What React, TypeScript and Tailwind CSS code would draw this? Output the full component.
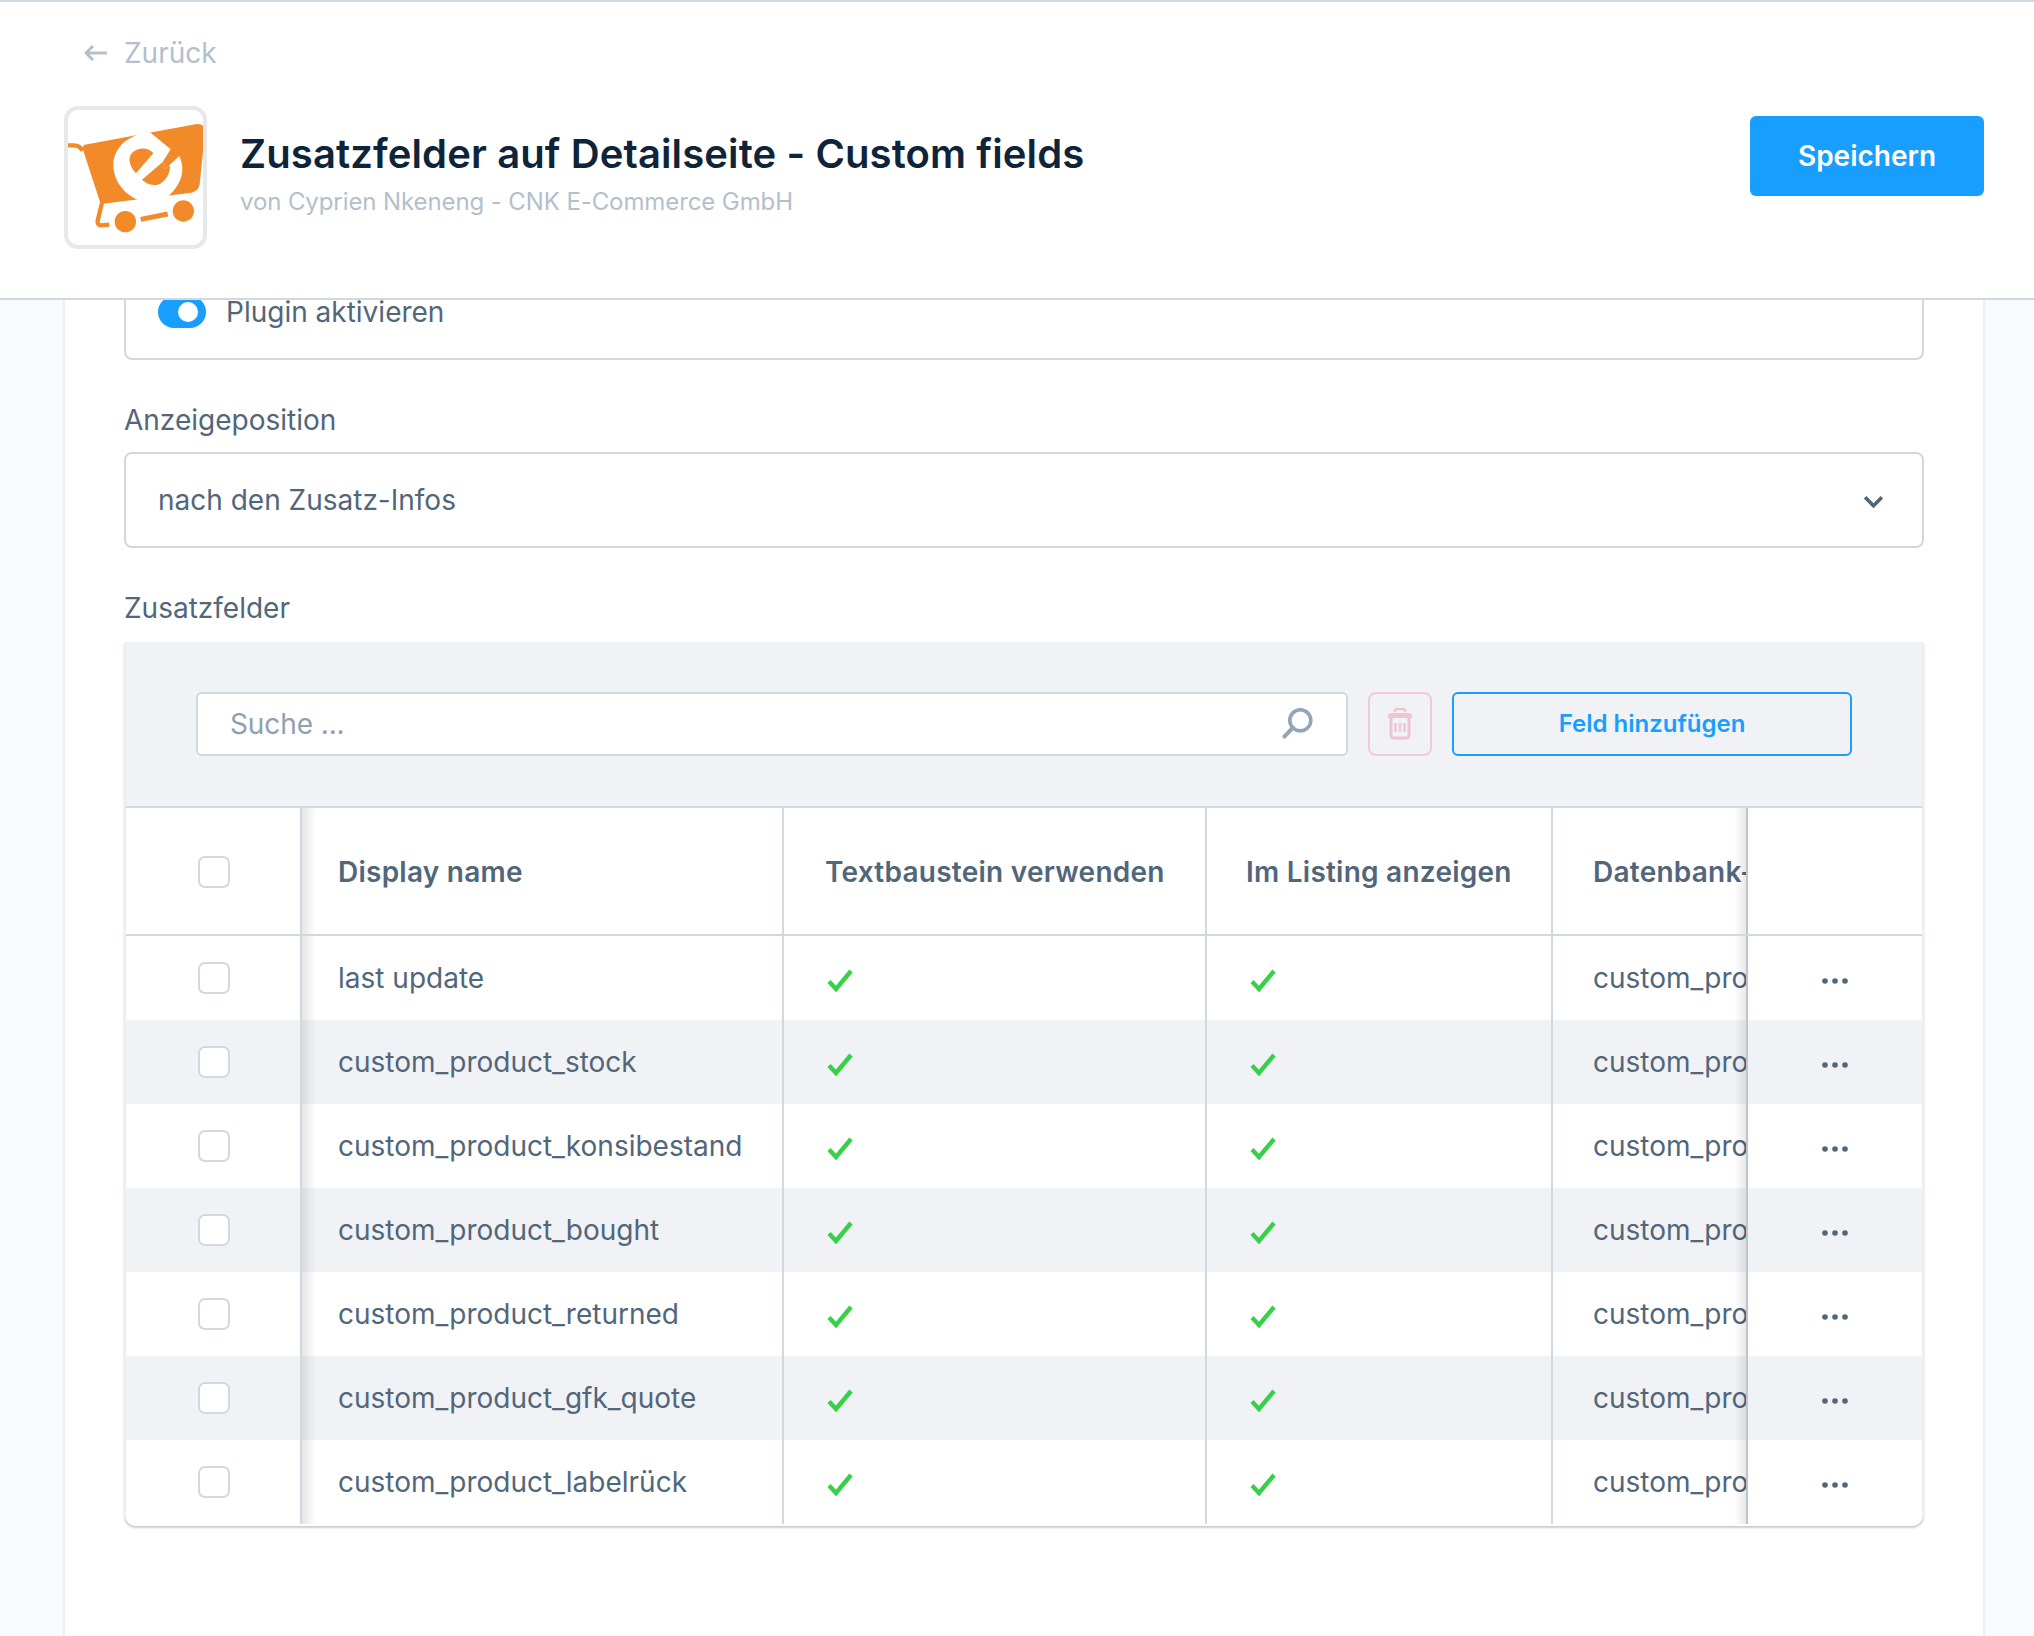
const rows = [
  "last update",
  "custom_product_stock",
  "custom_product_konsibestand",
  "custom_product_bought",
  "custom_product_returned",
  "custom_product_gfk_quote",
  "custom_product_labelrück",
];

function CartLogo() {
  return (
    <svg viewBox="54 60 405 405" className="h-full w-full">
      {/* cart */}
      <path d="M52 166h20c12 0 20 6 26 16" fill="none" stroke="#f28a2a" strokeWidth="13" />
      <path d="M104 164L436 103Q466 98 465 128L449 282Q446 304 424 308L152 342L98 176Q98 166 104 164Z" fill="#f28a2a" />
      <path d="M156 338L143 392Q141 406 154 406L178 404" fill="none" stroke="#f28a2a" strokeWidth="13" />
      <circle cx="226" cy="395" r="32" fill="#f28a2a" />
      <circle cx="400" cy="363" r="32" fill="#f28a2a" />
      <path d="M272 388L353 372" stroke="#f28a2a" strokeWidth="15" />
      {/* e */}
      <path d="M300 127C240 132 190 170 190 226C190 280 235 326 283 336L345 326C385 296 412 250 388 198L345 238L338 216L362 178Z" fill="#fff" />
      <path d="M258 250L310 190C295 170 262 172 245 190C232 206 240 232 258 250Z" fill="#f28a2a" />
      <path d="M276 269L338 216L345 238L360 226C362 250 345 280 320 285C304 287 288 280 276 269Z" fill="#f28a2a" />
    </svg>
  );
}

function Check() {
  return (
    <svg viewBox="0 0 26 24" className="mt-[4px] h-[24px] w-[26px]">
      <path d="M2 13.5L9 21L24 3" fill="none" stroke="#37d046" strokeWidth="4.4" />
    </svg>
  );
}

function Dots() {
  return (
    <svg viewBox="0 0 26 6" className="mt-[6px] h-[6px] w-[26px] fill-[#52667a]">
      <circle cx="3" cy="3" r="2.8" />
      <circle cx="13" cy="3" r="2.8" />
      <circle cx="23" cy="3" r="2.8" />
    </svg>
  );
}

function Checkbox() {
  return <div className="h-[32px] w-[32px] rounded-[7px] border-2 border-[#d1d9e0] bg-white" />;
}

function TableRow({ name, index }: { name: string; index: number }) {
  const bg = index % 2 === 1 ? "bg-[#f0f2f5]" : "bg-white";
  return (
    <div className={`flex h-[84px] items-center text-[28px] text-[#52667a] ${bg}`}>
      <div className="flex h-full w-[174px] shrink-0 items-center pl-[72px]">
        <Checkbox />
      </div>
      <div className="relative flex h-full w-[482px] shrink-0 items-center border-l-2 border-[#d1d9e0] pl-[36px]">
        <div className="absolute top-0 left-0 h-full w-[14px] bg-gradient-to-r from-black/10 to-transparent" />
        {name}
      </div>
      <div className="flex h-full w-[423px] shrink-0 items-center border-l-2 border-[#d1d9e0] pl-[43px]">
        <Check />
      </div>
      <div className="flex h-full w-[346px] shrink-0 items-center border-l-2 border-[#d1d9e0] pl-[43px]">
        <Check />
      </div>
      <div className="flex h-full w-[195px] shrink-0 items-center overflow-hidden border-l-2 border-[#d1d9e0] pl-[40px] whitespace-nowrap">
        custom_product
      </div>
      <div className="relative flex h-full w-[176px] shrink-0 items-center border-l-2 border-[#d1d9e0] pl-[74px]">
        <div className="absolute top-0 right-full h-full w-[14px] bg-gradient-to-l from-black/10 to-transparent" />
        <Dots />
      </div>
    </div>
  );
}

export default function App() {
  return (
    <div className="flex h-screen flex-col overflow-hidden bg-[#f9fafb] font-['Inter',sans-serif] text-[#52667a]">
      {/* Header */}
      <header className="h-[300px] shrink-0 border-y-2 border-[#d1d9e0] bg-white pr-[50px] pl-[64px]">
        <div className="mt-[33px] flex h-[36px] items-center gap-[16px] pl-[20px] text-[28px] text-[#b3bfcc]">
          <svg viewBox="0 0 24 18" className="h-[18px] w-[24px]">
            <path d="M23 9H2M9 2L2 9l7 7" fill="none" stroke="#b3bfcc" strokeWidth="3" />
          </svg>
          Zurück
        </div>
        <div className="mt-[35px] flex items-start">
          <div className="h-[143px] w-[143px] shrink-0 overflow-hidden rounded-[14px] border-4 border-[#e8e8e8] bg-white">
            <CartLogo />
          </div>
          <div className="mt-[21px] ml-[33px] flex-1">
            <h1 className="text-[40px] leading-[54px] font-semibold tracking-[0.12px] text-[#0f2439]">
              Zusatzfelder auf Detailseite - Custom fields
            </h1>
            <p className="mt-[1px] text-[24px] leading-[40px] tracking-[-0.1px] text-[#b3bfcc]">
              von Cyprien Nkeneng - CNK E-Commerce GmbH
            </p>
          </div>
          <button className="mt-[10px] h-[80px] w-[234px] rounded-[6px] bg-[#189eff] text-[28px] font-semibold text-white">
            Speichern
          </button>
        </div>
      </header>

      {/* Card */}
      <main className="flex-1 pr-[49px] pl-[63px]">
        <div className="h-full border-x-2 border-[#eceff2] bg-white px-[59px]">
          <div className="flex h-[60px] items-start gap-[20px] overflow-hidden rounded-b-[8px] border-x-2 border-b-2 border-[#d1d9e0] pl-[32px] text-[28px]">
            <div className="-mt-[4px] flex h-[32px] w-[48px] items-center justify-end rounded-full bg-[#189eff] pr-[8px]">
              <div className="h-[20px] w-[20px] rounded-full bg-white" />
            </div>
            <span className="leading-[24px]">Plugin aktivieren</span>
          </div>

          <div className="mt-[40px] mb-[12px] text-[28px] leading-[40px]">Anzeigeposition</div>
          <div className="flex h-[96px] items-center justify-between rounded-[8px] border-2 border-[#d1d9e0] pr-[38px] pl-[32px] text-[28px]">
            nach den Zusatz-Infos
            <svg viewBox="0 0 20 12" className="mt-[2px] h-[13px] w-[21px]">
              <path d="M2 2l8 8 8-8" fill="none" stroke="#52667a" strokeWidth="3.5" />
            </svg>
          </div>

          <div className="mt-[40px] mb-[14px] text-[28px] leading-[40px]">Zusatzfelder</div>
          <div className="overflow-hidden rounded-b-[12px] border-x-2 border-[#eceef1] bg-white pb-[2px] shadow-[0_2px_2px_rgba(0,0,0,0.2)]">
            <div className="flex h-[164px] items-center gap-[20px] bg-[#f0f2f5] px-[70px]">
              <div className="flex h-[64px] flex-1 items-center justify-between rounded-[6px] border-2 border-[#d1d9e0] bg-white px-[32px] text-[28px] tracking-[-0.1px] text-[#8fa0b2]">
                Suche ...
                <svg viewBox="0 0 32 32" className="h-[32px] w-[32px]">
                  <circle cx="18.3" cy="12.3" r="10.5" fill="none" stroke="#94a5b7" strokeWidth="3.6" />
                  <path d="M10.9 19.7L2.5 28.5" stroke="#94a5b7" strokeWidth="4" strokeLinecap="round" />
                </svg>
              </div>
              <div className="flex h-[64px] w-[64px] items-center justify-center rounded-[8px] border-2 border-[#efccd4]">
                <svg viewBox="0 0 26 32" className="h-[32px] w-[26px]">
                  <path d="M8 4V3q0-2 2-2h6q2 0 2 2v1" fill="none" stroke="#eec5ce" strokeWidth="2.5" />
                  <path d="M1 8q0-3 3-3h18q3 0 3 3v2H1z" fill="#eec5ce" />
                  <path d="M4 9v18q0 3 3 3h12q3 0 3-3V9" fill="none" stroke="#eec5ce" strokeWidth="3" />
                  <path d="M8.5 15v9M13 15v9M17.5 15v9" stroke="#eec5ce" strokeWidth="2.5" />
                </svg>
              </div>
              <button className="h-[64px] w-[400px] rounded-[6px] border-2 border-[#189eff] text-[24px] font-semibold text-[#189eff]">
                Feld hinzufügen
              </button>
            </div>

            {/* Header row */}
            <div className="flex h-[130px] items-stretch border-y-2 border-[#d1d9e0] text-[28px] font-semibold tracking-[0.24px]">
              <div className="flex w-[174px] shrink-0 items-center pt-[2px] pl-[72px]">
                <Checkbox />
              </div>
              <div className="relative flex w-[482px] shrink-0 items-center border-l-2 border-[#d1d9e0] pt-[2px] pl-[36px]">
                <div className="absolute top-0 left-0 h-full w-[14px] bg-gradient-to-r from-black/10 to-transparent" />
                Display name
              </div>
              <div className="flex w-[423px] shrink-0 items-center border-l-2 border-[#d1d9e0] pt-[2px] pl-[41px]">
                Textbaustein verwenden
              </div>
              <div className="flex w-[346px] shrink-0 items-center border-l-2 border-[#d1d9e0] pt-[2px] pl-[39px]">
                Im Listing anzeigen
              </div>
              <div className="flex w-[195px] shrink-0 items-center overflow-hidden border-l-2 border-[#d1d9e0] pt-[2px] pl-[40px] whitespace-nowrap">
                Datenbank-Name
              </div>
              <div className="relative w-[176px] shrink-0 border-l-2 border-[#d1d9e0]">
                <div className="absolute top-0 right-full h-full w-[14px] bg-gradient-to-l from-black/10 to-transparent" />
              </div>
            </div>

            {rows.map((name, i) => (
              <TableRow key={name} name={name} index={i} />
            ))}
          </div>
        </div>
      </main>
    </div>
  );
}
